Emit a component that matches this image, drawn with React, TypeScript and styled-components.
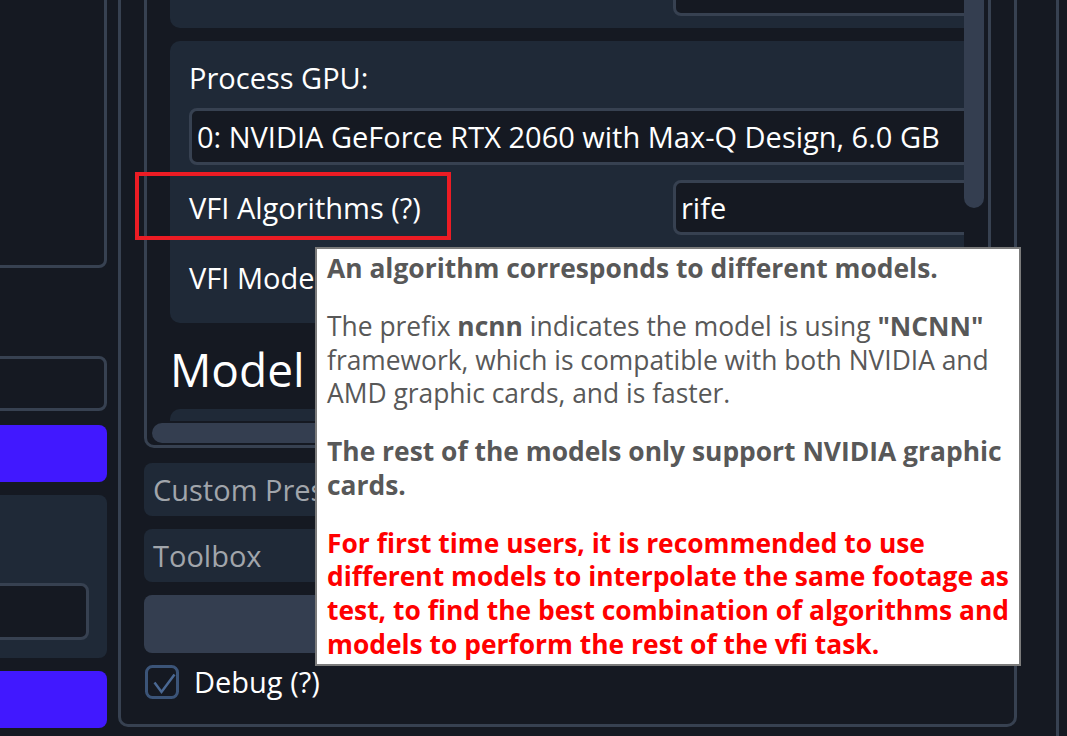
import React from "react";
import styled, { createGlobalStyle } from "styled-components";

const GlobalStyle = createGlobalStyle`
  html, body {
    margin: 0;
    padding: 0;
    background: #151922;
  }
  body {
    font-family: "Open Sans", "Noto Sans", "DejaVu Sans", sans-serif;
    overflow: hidden;
  }
  * {
    box-sizing: border-box;
  }
`;

const Screen = styled.div`
  position: relative;
  width: 1067px;
  height: 736px;
  overflow: hidden;
  background: #151922;
  color: #ffffff;
  font-size: 29px;
`;

/* the window is cropped: columns start above and left of the view */
const Canvas = styled.div`
  display: flex;
  align-items: flex-start;
  margin: -40px 0 0 -40px;
`;

const LeftCol = styled.div`
  width: 147px;
  flex: none;
  display: flex;
  flex-direction: column;
`;

const OutlineBox = styled.div<{ $h: number; $mt?: number }>`
  height: ${(p) => p.$h}px;
  margin-top: ${(p) => p.$mt ?? 0}px;
  border: 3px solid #374151;
  border-radius: 8px;
  background: #151922;
`;

const BlueButton = styled.div<{ $mt: number }>`
  height: 57px;
  margin-top: ${(p) => p.$mt}px;
  border-radius: 8px;
  background: #4118ff;
`;

const SideCard = styled.div`
  height: 163px;
  margin-top: 13px;
  padding: 88px 18px 0;
  border-radius: 8px;
  background: #1f2937;
`;

const MainPanel = styled.div`
  width: 899px;
  height: 767px;
  flex: none;
  margin-left: 11px;
  padding: 10px 23px 0;
  border: 3px solid #374151;
  border-radius: 10px;
  display: flex;
  flex-direction: column;
`;

const ScrollFrame = styled.div`
  height: 475px;
  flex: none;
  border: 3px solid #374151;
  border-radius: 10px;
  display: grid;
  grid-template-columns: 1fr 24px;
  grid-template-rows: 1fr 24px;
  overflow: hidden;
`;

const Viewport = styled.div`
  overflow: hidden;
  padding-left: 23px;
  display: flex;
  flex-direction: column;
  align-items: flex-start;
`;

const VTrack = styled.div`
  grid-column: 2;
  grid-row: 1;
`;

const VThumb = styled.div`
  width: 20px;
  height: 232px;
  border-radius: 10px;
  background: #343e50;
`;

const HTrack = styled.div`
  grid-column: 1;
  grid-row: 2;
  padding: 2px 0 0 5px;
`;

const HThumb = styled.div`
  width: 560px;
  height: 20px;
  border-radius: 10px;
  background: #343e50;
`;

const Card = styled.div<{ $mt?: number }>`
  width: 840px;
  flex: none;
  margin-top: ${(p) => p.$mt ?? 0}px;
  padding: 20px 19px 18px;
  border-radius: 10px;
  background: #1f2937;
`;

const TopCard = styled(Card)`
  height: 52px;
  padding: 0 19px 18px;
  display: grid;
  grid-template-columns: 484px 1fr;
  align-items: end;
`;

const StubCard = styled(Card)`
  height: 60px;
`;

const Label = styled.div`
  line-height: 34px;
  white-space: nowrap;
`;

const Select = styled.div<{ $h: number; $mt?: number }>`
  height: ${(p) => p.$h}px;
  margin-top: ${(p) => p.$mt ?? 0}px;
  padding: 0 5px;
  border: 3px solid #374151;
  border-radius: 8px;
  background: #151922;
  display: flex;
  align-items: center;
  white-space: nowrap;
`;

const FieldRow = styled.div`
  margin-top: 15px;
  display: grid;
  grid-template-columns: 484px 1fr;
  align-items: center;
`;

const Heading = styled.div`
  margin-top: 18px;
  font-size: 46px;
  line-height: 56px;
`;

const GhostInput = styled.div<{ $mt: number }>`
  height: 53px;
  flex: none;
  margin-top: ${(p) => p.$mt}px;
  padding-left: 9px;
  border-radius: 8px;
  background: #1f2937;
  color: #a1a5ab;
  display: flex;
  align-items: center;
  white-space: nowrap;
`;

const PlainButton = styled.div`
  height: 58px;
  flex: none;
  margin-top: 13px;
  border-radius: 8px;
  background: #343e50;
`;

const CheckRow = styled.label`
  margin: 12px 0 0 1px;
  height: 34px;
  display: flex;
  align-items: center;
  gap: 15px;
  line-height: 34px;
`;

const RightPanel = styled.div`
  width: 60px;
  height: 800px;
  flex: none;
  margin-left: 39px;
  border-left: 3px solid #374151;
`;

const Tooltip = styled.div`
  position: absolute;
  left: 315px;
  top: 247px;
  width: 706px;
  height: 419px;
  padding: 3px 10px;
  background: #ffffff;
  border: 2px solid #7b7b7b;
  color: #585858;
  font-size: 26.4px;
  line-height: 33.6px;
`;

const Para = styled.p<{ $bold?: boolean; $red?: boolean }>`
  margin: 0 0 24.4px;
  white-space: nowrap;
  font-weight: ${(p) => (p.$bold ? 700 : 400)};
  color: ${(p) => (p.$red ? "#ff0000" : "inherit")};
`;

const Highlight = styled.div`
  position: absolute;
  left: 135px;
  top: 172px;
  width: 316px;
  height: 68px;
  border: 4px solid #ec1c24;
`;

const CheckIcon = () => (
  <svg width="34" height="34" viewBox="0 0 34 34">
    <rect x="1.5" y="1.5" width="31" height="31" rx="6" fill="#151922" stroke="#3b5478" strokeWidth="3" />
    <path d="M9.5 17.5 L16.5 27 L29.5 9.5" fill="none" stroke="#4a6893" strokeWidth="2.5" />
  </svg>
);

export default function App() {
  return (
    <Screen>
      <GlobalStyle />
      <Canvas>
        <LeftCol>
          <OutlineBox $h={308} />
          <OutlineBox $h={55} $mt={88} />
          <BlueButton $mt={14} />
          <SideCard>
            <OutlineBox $h={57} />
          </SideCard>
          <BlueButton $mt={13} />
        </LeftCol>

        <MainPanel>
          <ScrollFrame>
            <Viewport>
              <TopCard>
                <span />
                <Select $h={40} />
              </TopCard>
              <Card $mt={13}>
                <Label>Process GPU:</Label>
                <Select $h={57} $mt={13}>
                  0: NVIDIA GeForce RTX 2060 with Max-Q Design, 6.0 GB
                </Select>
                <FieldRow>
                  <Label>VFI Algorithms (?)</Label>
                  <Select $h={55}>rife</Select>
                </FieldRow>
                <FieldRow>
                  <Label>VFI Model</Label>
                  <Select $h={55} />
                </FieldRow>
              </Card>
              <Heading>Model</Heading>
              <StubCard $mt={12} />
            </Viewport>
            <VTrack>
              <VThumb />
            </VTrack>
            <HTrack>
              <HThumb />
            </HTrack>
          </ScrollFrame>

          <GhostInput $mt={15}>Custom Preset</GhostInput>
          <GhostInput $mt={13}>Toolbox</GhostInput>
          <PlainButton />
          <CheckRow>
            <CheckIcon />
            <span>Debug (?)</span>
          </CheckRow>
        </MainPanel>

        <RightPanel />
      </Canvas>

      <Highlight />

      <Tooltip>
        <Para $bold>An algorithm corresponds to different models.</Para>
        <Para>
          The prefix <b>ncnn</b> indicates the model is using <b>"NCNN"</b>
          <br />
          framework, which is compatible with both NVIDIA and
          <br />
          AMD graphic cards, and is faster.
        </Para>
        <Para $bold>
          The rest of the models only support NVIDIA graphic
          <br />
          cards.
        </Para>
        <Para $bold $red>
          For first time users, it is recommended to use
          <br />
          different models to interpolate the same footage as
          <br />
          test, to find the best combination of algorithms and
          <br />
          models to perform the rest of the vfi task.
        </Para>
      </Tooltip>
    </Screen>
  );
}
